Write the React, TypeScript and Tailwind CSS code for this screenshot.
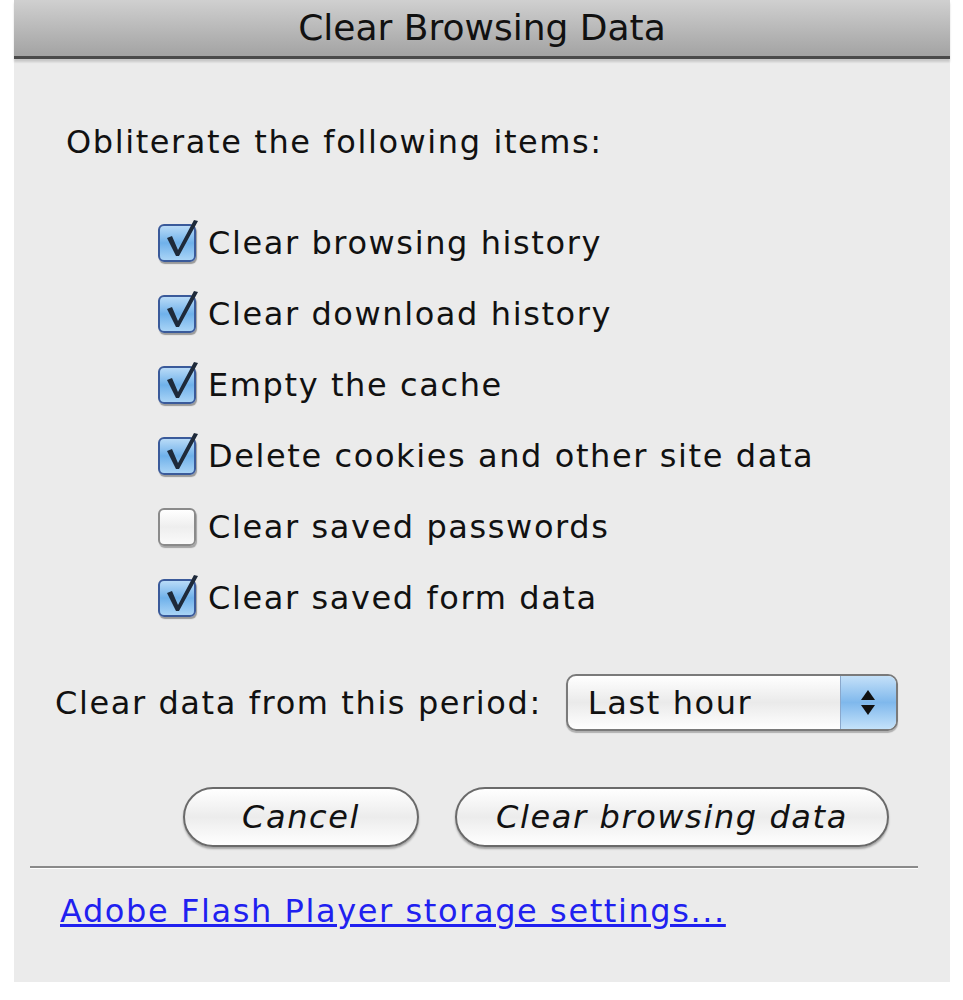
import React from "react";

const font = { fontFamily: '"DejaVu Sans", "Liberation Sans", sans-serif' };

function CheckBox({ checked }: { checked: boolean }) {
  return (
    <div className="relative w-[38px] h-[38px] shrink-0">
      <div
        className={
          checked
            ? "absolute inset-0 rounded-[6px] border-2 border-[#3a5a9a] bg-gradient-to-b from-[#b9dbf7] via-[#6fb1ea] to-[#a9d4f6] shadow-[1px_2px_1px_rgba(0,0,0,0.35)]"
            : "absolute inset-0 rounded-[6px] border-2 border-[#8a8a8a] bg-gradient-to-b from-[#ffffff] via-[#eeeeee] to-[#fafafa] shadow-[1px_2px_1px_rgba(0,0,0,0.3)]"
        }
      />
      {checked && (
        <svg className="absolute left-[6px] top-[-6px]" width="40" height="40" viewBox="0 0 40 40">
          <path d="M3 20 L8 18 L14 32 L30 2 L34 3 L15 38 L12 38 Z" fill="#1e2a3a" />
        </svg>
      )}
    </div>
  );
}

const items: [string, boolean][] = [
  ["Clear browsing history", true],
  ["Clear download history", true],
  ["Empty the cache", true],
  ["Delete cookies and other site data", true],
  ["Clear saved passwords", false],
  ["Clear saved form data", true],
];

const txt = "text-[32px] tracking-[1.6px] text-[#111] leading-none";

export default function App() {
  return (
    <div className="w-[963px] h-[1000px] bg-white" style={font}>
      <div className="ml-[14px] w-[936px] h-[982px] bg-[#ebebeb] flex flex-col">
        <div className="h-[59px] bg-gradient-to-b from-[#d0d0d0] to-[#a3a3a3] border-b-[3px] border-[#4a4a4a] flex items-center justify-center shadow-[0_3px_2px_rgba(0,0,0,0.15)]">
          <span className="text-[36px] text-[#111] leading-none">Clear Browsing Data</span>
        </div>
        <div className={"pl-[52px] pt-[67px] " + txt}>Obliterate the following items:</div>
        <div className="flex flex-col gap-[33px] pl-[144px] pt-[66px]">
          {items.map(([label, checked], i) => (
            <div key={i} className="flex items-center gap-[12px] h-[38px]">
              <CheckBox checked={checked} />
              <span className={txt}>{label}</span>
            </div>
          ))}
        </div>
        <div className="flex items-center pl-[41px] pt-[57px]">
          <span className={txt}>Clear data from this period:</span>
          <div className="ml-[24px] w-[332px] h-[57px] rounded-[10px] border-2 border-[#7a7a7a] bg-gradient-to-b from-[#ffffff] via-[#eaeaea] to-[#ffffff] flex items-stretch overflow-hidden shadow-[0_2px_1px_rgba(0,0,0,0.25)]">
            <span className={"flex-1 flex items-center pl-[20px] " + txt}>Last hour</span>
            <div className="w-[56px] bg-gradient-to-b from-[#c4e0f8] via-[#7fb8ec] to-[#c4e2fa] border-l border-[#8aa8cc] flex flex-col items-center justify-center gap-[5px]">
              <svg width="14" height="10" viewBox="0 0 14 10"><path d="M7 0 L14 10 L0 10 Z" fill="#111" /></svg>
              <svg width="14" height="10" viewBox="0 0 14 10"><path d="M0 0 L14 0 L7 10 Z" fill="#111" /></svg>
            </div>
          </div>
        </div>
        <div className="flex items-center pl-[169px] pt-[56px] gap-[36px]">
          <button className={"w-[236px] h-[60px] rounded-full border-2 border-[#6a6a6a] bg-gradient-to-b from-[#ffffff] via-[#ececec] to-[#ffffff] shadow-[0_2px_2px_rgba(0,0,0,0.3)] italic " + txt}>Cancel</button>
          <button className={"w-[434px] h-[60px] rounded-full border-2 border-[#6a6a6a] bg-gradient-to-b from-[#ffffff] via-[#ececec] to-[#ffffff] shadow-[0_2px_2px_rgba(0,0,0,0.3)] italic " + txt}>Clear browsing data</button>
        </div>
        <div className="ml-[16px] mr-[32px] mt-[19px] h-[3px] bg-[#8a8a8a] border-b border-white" />
        <div className="pl-[46px] pt-[26px]">
          <span className="text-[32px] tracking-[1.6px] leading-none text-[#2020f0] underline">Adobe Flash Player storage settings...</span>
        </div>
      </div>
    </div>
  );
}
